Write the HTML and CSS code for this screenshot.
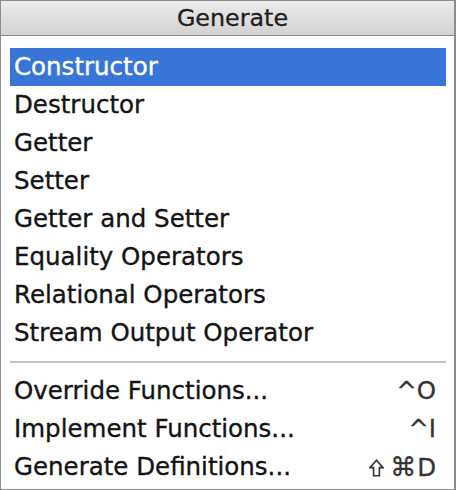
FILE: index.html
```html
<!DOCTYPE html>
<html>
<head>
<meta charset="utf-8">
<link rel="stylesheet" href="styles.css">
</head>
<body>
<div class="win">
  <div class="title">Generate</div>
  <div class="menu">
    <div class="item sel">Constructor</div>
    <div class="item">Destructor</div>
    <div class="item">Getter</div>
    <div class="item">Setter</div>
    <div class="item">Getter and Setter</div>
    <div class="item">Equality Operators</div>
    <div class="item">Relational Operators</div>
    <div class="item">Stream Output Operator</div>
    <div class="sep"></div>
    <div class="item"><span>Override Functions...</span><span class="key">^O</span></div>
    <div class="item"><span>Implement Functions...</span><span class="key">^I</span></div>
    <div class="item"><span>Generate Definitions...</span><span class="key"><svg class="shift" width="15" height="18" viewBox="0 0 15 18"><path d="M7.5 1.2 L14 8.6 H10.4 V16.8 H4.6 V8.6 H1 Z" fill="none" stroke="#333" stroke-width="1.6" stroke-linejoin="miter"/></svg><span class="cmd">⌘</span>D</span></div>
  </div>
</div>
</body>
</html>
```
FILE: styles.css
```css
html, body { margin: 0; padding: 0; background: #fff; }
.win {
  width: 456px; height: 490px; box-sizing: border-box;
  border: 1px solid #8c8c8c; border-right-width: 2px;
  font-family: "DejaVu Sans", sans-serif;
  display: flex; flex-direction: column;
}
.title {
  height: 35px; box-sizing: border-box;
  background: linear-gradient(#ececec, #d2d2d2);
  border-bottom: 1px solid #8a8a8a;
  padding-left: 10px;
  text-align: center; font-size: 23.8px; line-height: 35px; color: #1e1e1e;
  -webkit-text-stroke: 0.35px #1e1e1e;
  text-shadow: 0 1px 0 rgba(255,255,255,0.6);
}
.menu { padding: 12px 8px 0 9px; display: flex; flex-direction: column; }
.item {
  height: 38px; line-height: 38px; padding: 0 10px 0 4px;
  font-size: 24.5px; color: #141414;
  -webkit-text-stroke: 0.35px #141414;
  display: flex; justify-content: space-between;
  white-space: nowrap;
}
.sel { background: #3875d7; color: #fff; -webkit-text-stroke: 0.35px #fff; }
.sep { height: 2px; background: #c4c4c4; margin: 9px 0 9px 0; }
.key { color: #333; -webkit-text-stroke: 0.3px #333; }
.shift { vertical-align: -1px; margin-right: 6px; }
.cmd { font-size: 26px; margin-right: 1px; }
```
